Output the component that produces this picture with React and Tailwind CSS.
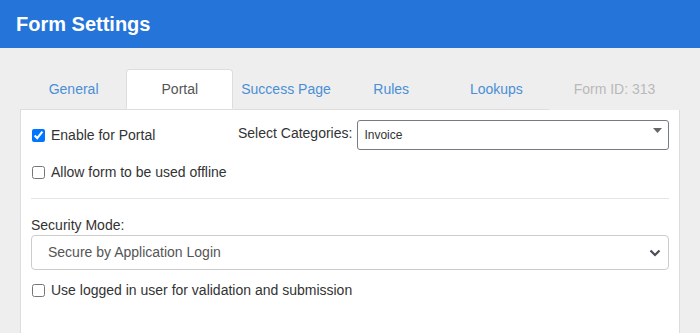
import { useState } from "react";

const tabs = ["General", "Portal", "Success Page", "Rules", "Lookups"];

function Check({ checked, label }) {
  const [on, setOn] = useState(checked);
  return (
    <label className="flex items-center h-5 text-[14px] text-[#333]">
      <input
        type="checkbox"
        checked={on}
        onChange={() => setOn(!on)}
        className="m-0 ml-px w-[13px] h-[13px]"
      />
      <span className="ml-[6px]">{label}</span>
    </label>
  );
}

export default function App() {
  const [active, setActive] = useState("Portal");

  return (
    <div
      className="min-h-screen flex flex-col bg-[#eeeeee]"
      style={{ fontFamily: '"Liberation Sans", Arial, sans-serif' }}
    >
      {/* header */}
      <div className="h-12 bg-[#2574d9] flex items-center px-4">
        <h1 className="text-white text-[20px] font-bold">Form Settings</h1>
      </div>

      <div className="flex-1 flex flex-col pt-[21px] pl-[20px] w-[680px]">
        {/* tabs */}
        <div className="flex">
          <ul className="flex w-[529px] border-b border-[#dddddd] pl-px">
            {tabs.map((t) => (
              <li
                key={t}
                onClick={() => setActive(t)}
                className={
                  t === active
                    ? "flex-1 h-10 -mb-px flex items-center justify-center text-[14px] text-[#555] bg-white border border-[#dddddd] border-b-white rounded-t-[4px] cursor-pointer"
                    : "flex-1 h-10 flex items-center justify-center text-[14px] text-[#4a8fd6] cursor-pointer"
                }
              >
                {t}
              </li>
            ))}
          </ul>
          <div className="flex-1 flex items-center justify-center text-[14px] text-[#b9b9b9]">
            Form ID: 313
          </div>
        </div>

        {/* panel */}
        <div className="flex-1 bg-white border-l border-r border-[#dddddd] pl-[10px] pr-[10px] pt-[10px]">
          <div className="flex items-start">
            <div className="w-[207px] h-[30px] flex items-center">
              <Check checked label="Enable for Portal" />
            </div>
            <div className="h-[26px] flex items-center text-[14px] text-[#333] pr-[5px]">
              Select Categories:
            </div>
            <div className="flex-1 h-[30px] border border-[#767b82] rounded-[3px] flex items-center pl-[6px] pr-[6px] text-[12px] text-[#333]">
              <span className="flex-1">Invoice</span>
              <svg width="9" height="5" viewBox="0 0 9 5" className="self-start mt-[7px]">
                <path d="M0 0H9L4.5 5Z" fill="#666" />
              </svg>
            </div>
          </div>

          <div className="mt-[12px]">
            <Check label="Allow form to be used offline" />
          </div>

          <div className="mt-[16px] border-t border-[#e5e5e5]" />

          <div className="mt-[16px] h-5 flex items-center text-[14px] text-[#333]">
            Security Mode:
          </div>
          <div className="h-[35px] border border-[#cccccc] rounded-[4px] flex items-center pl-4 pr-[7px] text-[14px] text-[#555]">
            <span className="flex-1">Secure by Application Login</span>
            <svg width="12" height="8" viewBox="0 0 12 8">
              <path d="M1.5 1.5L6 6L10.5 1.5" stroke="#4a4f55" strokeWidth="2.2" fill="none" />
            </svg>
          </div>

          <div className="mt-[10px]">
            <Check label="Use logged in user for validation and submission" />
          </div>
        </div>
      </div>
    </div>
  );
}
